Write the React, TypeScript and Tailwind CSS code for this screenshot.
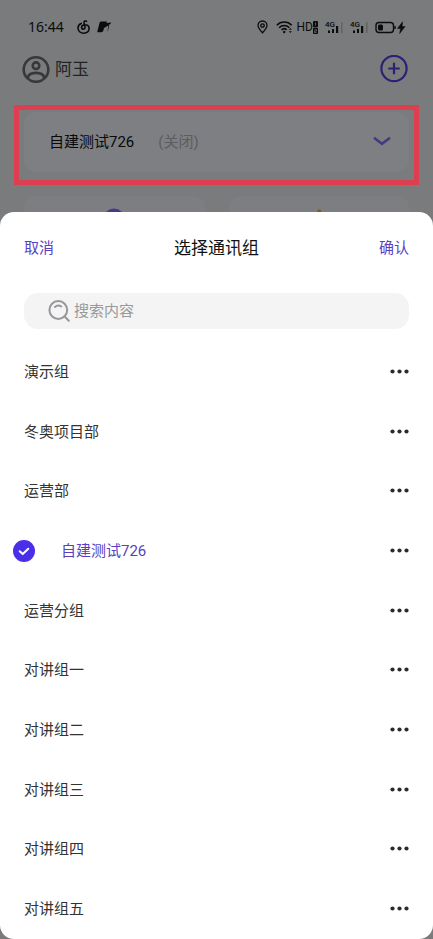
import { useState } from "react";

interface Group {
  id: number;
  name: string;
}

const GROUPS: Group[] = [
  { id: 1, name: "演示组" },
  { id: 2, name: "冬奥项目部" },
  { id: 3, name: "运营部" },
  { id: 4, name: "自建测试726" },
  { id: 5, name: "运营分组" },
  { id: 6, name: "对讲组一" },
  { id: 7, name: "对讲组二" },
  { id: 8, name: "对讲组三" },
  { id: 9, name: "对讲组四" },
  { id: 10, name: "对讲组五" },
];

export default function App() {
  const [selected, setSelected] = useState(4);
  const [query, setQuery] = useState("");

  const visible = GROUPS.filter((g) => g.name.includes(query.trim()));

  return (
    <div className="flex min-h-screen flex-col bg-[#7a7b7c] font-[Roboto,'Noto_Sans_CJK_SC',sans-serif] text-[15px] leading-6">
      <StatusBar />
      <TopBar />
      <CurrentGroup />
      <Tiles />

      <section
        role="dialog"
        aria-label="选择通讯组"
        className="relative -mt-6 flex flex-1 flex-col rounded-[14px] bg-white"
      >
        <header className="flex h-[72px] items-center justify-between px-6">
          <button type="button" className="text-[#5a3fc0]">取消</button>
          <h2 className="text-[17px] text-[#111]">选择通讯组</h2>
          <button type="button" className="text-[#5a3fc0]">确认</button>
        </header>

        <label className="mx-6 mt-[9px] flex h-9 items-center gap-1 rounded-[14px] bg-[#f4f4f4] pl-6 pr-4">
          <SearchIcon />
          <input
            type="text"
            aria-label="搜索内容"
            placeholder="搜索内容"
            value={query}
            onChange={(e) => setQuery(e.target.value)}
            className="min-w-0 flex-1 bg-transparent text-[#333] outline-none placeholder:text-[#999]"
          />
        </label>

        <ul className="mt-[13px] flex flex-1 flex-col">
          {visible.map((g) => (
            <GroupRow
              key={g.id}
              group={g}
              checked={g.id === selected}
              onSelect={() => setSelected(g.id)}
            />
          ))}
        </ul>
      </section>
    </div>
  );
}

function GroupRow({
  group,
  checked,
  onSelect,
}: {
  group: Group;
  checked: boolean;
  onSelect: () => void;
}) {
  return (
    <li className="flex max-h-[60px] min-h-12 flex-1 items-center pr-6">
      <label
        className={`relative flex flex-1 cursor-pointer items-center gap-[26px] ${
          checked ? "pl-[13px] text-[#5a3fc0]" : "pl-6 text-[#333]"
        }`}
      >
        <input
          type="radio"
          name="group"
          checked={checked}
          onChange={onSelect}
          className="sr-only"
        />
        {checked && <CheckIcon />}
        {group.name}
      </label>
      <button type="button" aria-label={`${group.name} 更多`} className="py-2">
        <svg width="19" height="6" viewBox="0 0 19 6" fill="#2b2b2b">
          <circle cx="2.5" cy="2.5" r="2.1" />
          <circle cx="9.5" cy="2.5" r="2.1" />
          <circle cx="16.5" cy="2.5" r="2.1" />
        </svg>
      </button>
    </li>
  );
}

function TopBar() {
  return (
    <div className="flex h-[30px] items-center justify-between pl-[22px] pr-[25px]">
      <div className="flex items-center gap-[5px]">
        <svg width="28" height="28" viewBox="0 0 28 28" fill="none" stroke="#37383a" strokeWidth="2.6">
          <circle cx="14" cy="14.500" r="12.300" />
          <circle cx="14" cy="10.700" r="3.300" />
          <path d="M5.800 23.100c.4-3.700 3.200-5.200 8.200-5.200s7.800 1.500 8.200 5.200" />
        </svg>
        <span className="text-[17px] text-[#232425]">阿玉</span>
      </div>
      <button type="button" aria-label="添加">
        <svg width="28" height="28" viewBox="0 0 28 28" fill="none" stroke="#2e2175" strokeWidth="2.200">
          <circle cx="14" cy="13.500" r="12.600" />
          <path d="M14 7.800v11.400M8.300 13.500h11.400" />
        </svg>
      </button>
    </div>
  );
}

function CurrentGroup() {
  return (
    <div className="mx-[14px] mt-[21px] border-[5px] border-[#dd3e50] px-[5px] pb-2 pt-[2px]">
      <button
        type="button"
        className="flex h-[60px] w-full items-center rounded-xl bg-[#7e7f83] pl-[25px] pr-4"
      >
        <span className="text-[#090909]">自建测试726</span>
        <span className="ml-6 text-[#5c5d60]">(关闭)</span>
        <svg className="ml-auto" width="22" height="12" viewBox="0 0 22 12" fill="none" stroke="#453a80" strokeWidth="2.600">
          <path d="M3 1.800 11 7.800l8-6" />
        </svg>
      </button>
    </div>
  );
}

function Tiles() {
  return (
    <div className="mx-6 mt-[11px] grid grid-cols-2 gap-6">
      <div className="flex h-10 justify-center rounded-xl bg-[#7d7e81] pt-3">
        <svg width="22" height="22" viewBox="0 0 22 22">
          <circle cx="11" cy="11" r="10.500" fill="#463b86" />
        </svg>
      </div>
      <div className="flex h-10 justify-center rounded-xl bg-[#7d7e81] pt-3">
        <svg width="22" height="22" viewBox="0 0 22 22">
          <path d="M10 1.500h2.500L21 21H1z" fill="#7d5a2c" />
        </svg>
      </div>
    </div>
  );
}

function StatusBar() {
  return (
    <div className="flex h-[54px] items-center pl-7 pr-[27px] text-[#0c0c0c]">
      <span className="font-['Noto_Sans'] text-[14px]">16:44</span>
      <svg className="ml-[13px]" width="13" height="14" viewBox="0 0 13 14" fill="none" stroke="currentColor" strokeWidth="1.600" strokeLinecap="round">
        <path d="M9.500 1.300C8.400.7 7 1 7 2.400c0 1.200.9 3 1 4.900.1 2.400-3.400 2.500-3.400.2 0-1.800 1.600-2.700 3.500-2.700 2.400 0 4 1.700 4 3.800 0 2.700-2.200 4.600-5.400 4.600-3.300 0-5.700-2.200-5.700-5.200 0-2.200 1.300-3.900 3.200-4.600" />
      </svg>
      <svg className="ml-[7px]" width="15" height="12" viewBox="0 0 15 12" fill="currentColor">
        <path d="M4 .5h6L9.500 2l4.700-.4-.8 1.400-1 .3-.9 4.300c-.2 1.200-.5 2.300-1.100 3.100l1-6.400L8.900 6 7 7l-.6 2.600c-.4 1.300-1.100 1.600-2 1.600H.2L2.300 2.800C2.700 1.400 3 .5 4 .5z" />
      </svg>

      <div className="ml-auto flex items-center">
        <svg width="11" height="14" viewBox="0 0 11 14" fill="none" stroke="currentColor" strokeWidth="1.300">
          <path d="M5.500 12.800C3.200 10.300 1 7.900 1 5.500a4.500 4.500 0 0 1 9 0c0 2.400-2.200 4.800-4.500 7.300z" />
          <circle cx="5.500" cy="5.500" r="1.700" />
        </svg>
        <svg className="ml-2" width="17" height="14" viewBox="0 0 17 14" fill="none" stroke="currentColor" strokeWidth="1.600">
          <path d="M.8 5.200c4-4.200 10.900-4.200 14.900 0M3.100 7.700c2.900-2.900 7.400-2.900 10.300 0M5.500 10c1.500-1.500 3.700-1.600 5.200-.2" />
          <circle cx="8.200" cy="12" r="1.200" fill="currentColor" stroke="none" />
          <path d="m12.800 9.800 1.500-1.900 1.500 1.900zM12.800 11.200l1.500 1.900 1.500-1.900z" fill="currentColor" stroke="none" />
        </svg>
        <span className="ml-1 text-[12px]">HD</span>
        <svg width="5" height="13" viewBox="0 0 5 13">
          <rect width="5" height="6.200" rx="1" fill="currentColor" />
          <rect y="6.800" width="5" height="6.200" rx="1" fill="currentColor" />
          <path d="M2.500 1.500v3M1.500 8.700h2v1.300h-2v1.500h2" fill="none" stroke="#7a7b7c" strokeWidth=".7" />
        </svg>
        <Signal />
        <Signal />
        <svg className="ml-[7px]" width="31" height="13" viewBox="0 0 31 13" fill="none" stroke="currentColor">
          <rect x="1" y="1.500" width="17.500" height="10" rx="3" strokeWidth="1.400" />
          <rect x="3" y="3.500" width="5" height="6" rx="1.500" fill="currentColor" stroke="none" />
          <path d="M20 5v3" strokeWidth="1.400" />
          <path d="m27.600.8-5.100 6.700h3l-.8 5 5.400-6.900h-3z" fill="currentColor" stroke="currentColor" strokeWidth=".5" />
        </svg>
      </div>
    </div>
  );
}

// 4G label above the bars, last bar is dimmed
function Signal() {
  return (
    <svg className="ml-[7px]" width="18" height="13" viewBox="0 0 18 13" fill="currentColor">
      <text x="0" y="6" fontSize="8" fontWeight="500" fontFamily="Roboto, sans-serif">4G</text>
      <rect x="3" y="9.500" width="2" height="2.500" />
      <rect x="7" y="8" width="2" height="4" />
      <rect x="11" y="5" width="2.200" height="7" />
      <rect x="16" y="1" width="1.500" height="11" opacity=".22" />
    </svg>
  );
}

function SearchIcon() {
  return (
    <svg width="22" height="23" viewBox="0 0 22 23" fill="none" stroke="#97979b" strokeWidth="2" strokeLinecap="round">
      <circle cx="10.300" cy="10" r="8.900" />
      <path d="m16.700 16.500 4.100 4.300M6.900 6.900c2-1.700 4.500-1.700 6.300-.4" />
    </svg>
  );
}

function CheckIcon() {
  return (
    <svg width="22" height="22" viewBox="0 0 22 22" fill="none">
      <circle cx="11" cy="11" r="11" fill="#4a2fe8" />
      <path d="m6.700 11.300 3 2.800 5.600-5.300" stroke="#fff" strokeWidth="2" strokeLinecap="round" strokeLinejoin="round" />
    </svg>
  );
}
